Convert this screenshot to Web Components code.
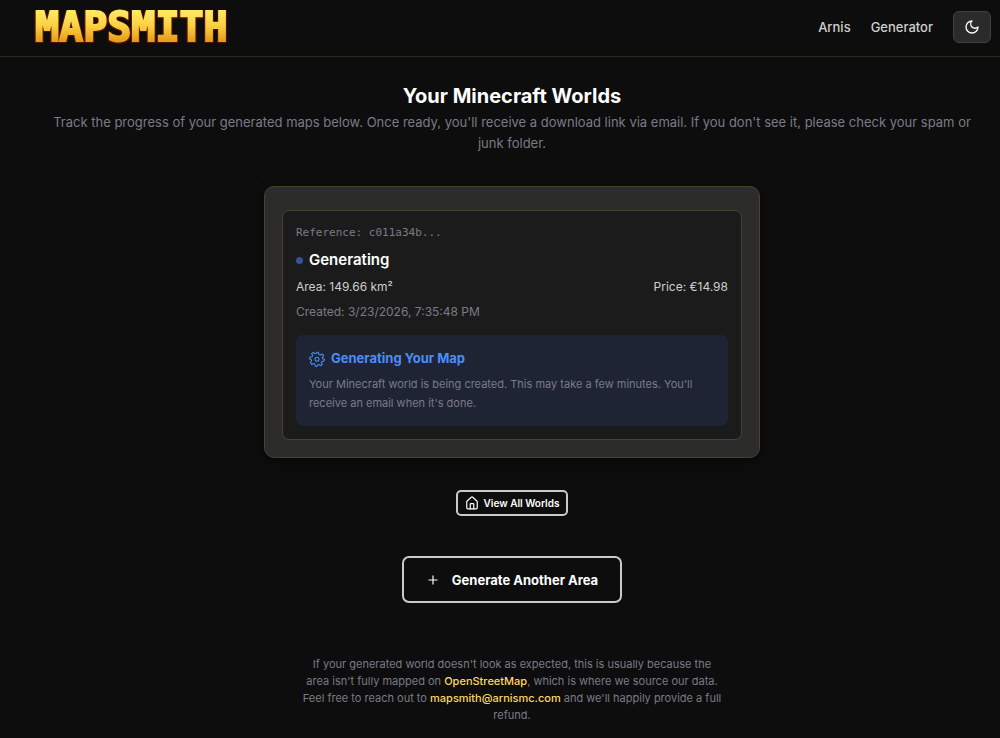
<!DOCTYPE html>
<html lang="en">
<head>
<meta charset="utf-8">
<meta name="viewport" content="width=device-width, initial-scale=1">
<title>Mapsmith</title>
<style>
  html { background: #0d0d0d; }
  body {
    margin: 0;
    background: #0d0d0d;
    color: #fff;
    font-family: Inter, "Liberation Sans", sans-serif;
    --muted: #7b7b86;
    --soft: #cfcfcf;
    --line: #45422f;
    --blue: #4d8df7;
    --gold: #fcd660;
  }
</style>
</head>
<body>
<map-page></map-page>
<script>
const define = (name, html) => {
  const template = document.createElement('template');
  template.innerHTML = html;
  customElements.define(name, class extends HTMLElement {
    constructor() {
      super();
      this.attachShadow({ mode: 'open' }).append(template.content.cloneNode(true));
    }
  });
};

define('map-logo', `
<style>
  :host { display: block; }
  a {
    display: block;
    padding: 0 1px;
    font: bold 40px/54px "DejaVu Sans Mono", monospace;
    text-decoration: none;
    color: transparent;
    background: linear-gradient(#ffe860 12px, #fbcf42 26px, #e39a16 42px);
    -webkit-background-clip: text;
    background-clip: text;
    -webkit-text-stroke: 2px transparent;
    filter: drop-shadow(1px 0 0 #541300) drop-shadow(-1px 0 0 #541300) drop-shadow(0 1px 0 #541300);
  }
</style>
<a href="#">MAPSMITH</a>`);

define('map-header', `
<style>
  :host { display: flex; align-items: center; justify-content: space-between;
    height: 54px; padding: 0 9px 2px 34px; border-bottom: 1px solid #2b2a1f; }
  nav { display: flex; align-items: center; gap: 20px; }
  nav a { color: var(--soft); text-decoration: none; font-size: 13px; line-height: 20px; font-weight: 500; }
  button { display: grid; place-items: center; box-sizing: border-box; width: 38px; height: 32px; padding: 0;
    border: 1px solid #434239; border-radius: 6px; background: #2b2b2b; color: #fff; }
</style>
<map-logo></map-logo>
<nav>
  <a href="#">Arnis</a>
  <a href="#">Generator</a>
  <button type="button" aria-label="Toggle theme">
    <svg width="16" height="16" viewBox="0 0 24 24" fill="none" stroke="currentColor" stroke-width="2" stroke-linecap="round" stroke-linejoin="round"><path d="M12 3a6 6 0 0 0 9 9 9 9 0 1 1-9-9Z"/></svg>
  </button>
</nav>`);

define('map-notice', `
<style>
  :host { display: block; padding: 13px; border-radius: 7px; background: #1e2433; }
  h3 { display: flex; align-items: center; gap: 6px; margin: 0 0 6px; color: var(--blue);
    font-size: 13px; line-height: 21px; font-weight: 700; }
  p { margin: 0; color: var(--muted); font-size: 11px; line-height: 19px; }
</style>
<h3>
  <svg width="16" height="16" viewBox="0 0 24 24" fill="none" stroke="currentColor" stroke-width="1.6" stroke-linejoin="round"><path d="M12 1.8 14 2 14.7 5 17 6 19.6 4.4 22 7 20 9.6 20.5 11.5 23 12.5 22.5 15 19.5 15.7 18.5 17.5 20 20.2 17.5 22 15 20.2 13 21 12 23.4 9.5 23 8.8 20 6.7 18.8 4 20.2 2 17.6 3.8 15 3.3 13 1 12 1.5 9.2 4.6 8.5 5.6 6.7 4 4 6.5 2.2 9 4 11 3.8Z"/><circle cx="12" cy="12.4" r="3"/></svg>
  <slot name="title"></slot>
</h3>
<p><slot></slot></p>`);

define('map-order', `
<style>
  :host { display: block; box-sizing: border-box; width: 100%; max-width: 496px;
    padding: 23px 17px 17px; border: 1px solid var(--line); border-radius: 10px; background: #2c2c2b;
    box-shadow: 0 3px 10px #0008; }
  article { padding: 13px; border: 1px solid var(--line); border-radius: 7px; background: #1b1b1b; }
  .ref { margin: 0; color: var(--muted); font: 11px/18px "DejaVu Sans Mono", monospace; }
  h2 { display: flex; align-items: center; gap: 6px; margin: 6px 0; font-size: 15px; line-height: 24px; font-weight: 600; }
  .dot { width: 7px; height: 7px; border-radius: 50%; background: #35529a; }
  .row { display: flex; justify-content: space-between; margin-bottom: 7px; color: var(--soft); font-size: 12px; line-height: 18px; }
  .date { margin: 0 0 14px; color: var(--muted); font-size: 12px; line-height: 18px; }
</style>
<article>
  <p class="ref">Reference: c011a34b...</p>
  <h2><span class="dot"></span>Generating</h2>
  <div class="row"><span>Area: 149.66 km²</span><span>Price: €14.98</span></div>
  <p class="date">Created: 3/23/2026, 7:35:48 PM</p>
  <map-notice><span slot="title">Generating Your Map</span>Your Minecraft world is being created. This may take a few minutes. You'll receive an email when it's done.</map-notice>
</article>`);

define('map-button', `
<style>
  :host { display: block; }
  button { display: flex; align-items: center; justify-content: center; gap: 5px; box-sizing: border-box;
    height: 26px; padding: 0 7px; border: 2px solid #c9c9c9; border-radius: 5px; background: transparent;
    color: #fff; font: 600 10px/16px Inter, "Liberation Sans", sans-serif; }
  :host([large]) button { height: 47px; padding: 0 22px; gap: 12px; border-radius: 7px; font-size: 13px; line-height: 20px; font-weight: 700; }
</style>
<button type="button"><slot name="icon"></slot><slot></slot></button>`);

define('map-page', `
<style>
  :host { display: block; }
  main { display: flex; flex-direction: column; align-items: center; padding: 24px 20px 14px 44px; text-align: center; }
  h1 { margin: 0 0 1px; font-size: 20px; line-height: 30px; font-weight: 700; }
  .lead { margin: 0 0 32px; color: var(--muted); font-size: 13px; line-height: 21px; }
  map-order { margin-bottom: 32px; text-align: left; }
  map-button { margin-bottom: 40px; }
  map-button[large] { margin-bottom: 53px; }
  .help { max-width: 420px; margin: 0; color: var(--muted); font-size: 11px; line-height: 17px; }
  .help a { color: var(--gold); text-decoration: none; font-weight: 500; }
</style>
<map-header></map-header>
<main>
  <h1>Your Minecraft Worlds</h1>
  <p class="lead">Track the progress of your generated maps below. Once ready, you'll receive a download link via email. If you don't see it, please check your spam or junk folder.</p>
  <map-order></map-order>
  <map-button><svg slot="icon" width="14" height="14" viewBox="0 0 24 24" fill="none" stroke="currentColor" stroke-width="2" stroke-linecap="round" stroke-linejoin="round"><path d="M15 22v-8a1 1 0 0 0-1-1h-4a1 1 0 0 0-1 1v8"/><path d="M3 10a2 2 0 0 1 .7-1.5l7-6.3a2 2 0 0 1 2.6 0l7 6.3A2 2 0 0 1 21 10v10a2 2 0 0 1-2 2H5a2 2 0 0 1-2-2Z"/></svg>View All Worlds</map-button>
  <map-button large><svg slot="icon" width="14" height="14" viewBox="0 0 24 24" fill="none" stroke="currentColor" stroke-width="2" stroke-linecap="round"><path d="M5 12h14M12 5v14"/></svg>Generate Another Area</map-button>
  <p class="help">If your generated world doesn't look as expected, this is usually because the area isn't fully mapped on <a href="#">OpenStreetMap</a>, which is where we source our data. Feel free to reach out to <a href="#">mapsmith@arnismc.com</a> and we'll happily provide a full refund.</p>
</main>`);
</script>
</body>
</html>
